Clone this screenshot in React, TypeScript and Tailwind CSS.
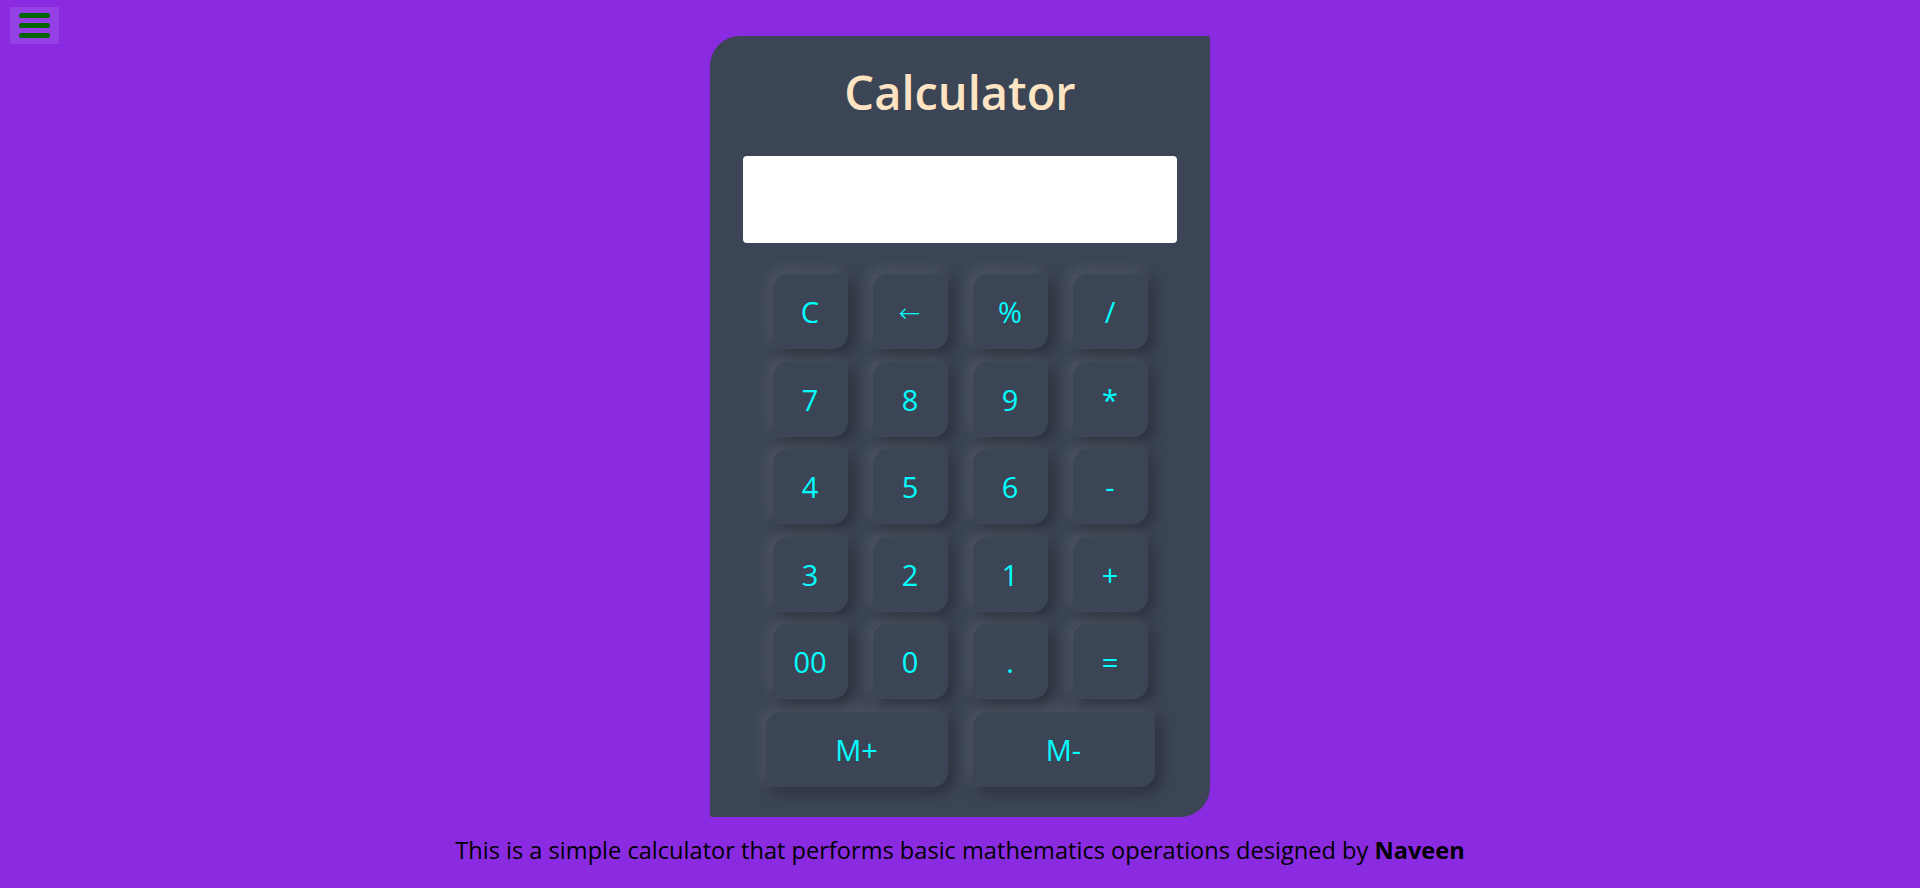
import React from "react";

const rows: string[][] = [
  ["C", "←", "%", "/"],
  ["7", "8", "9", "*"],
  ["4", "5", "6", "-"],
  ["3", "2", "1", "+"],
  ["00", "0", ".", "="],
];

const btnShadow =
  "shadow-[-5px_-5px_15px_rgba(255,255,255,0.1),5px_5px_15px_rgba(0,0,0,0.35)]";

export default function App() {
  return (
    <div
      className="relative min-h-[888px] w-full bg-[#8a2be2] pt-[36px]"
      style={{ fontFamily: '"Open Sans", "Noto Sans", sans-serif' }}
    >
      <button className="absolute left-[10px] top-[7px] flex h-[37px] w-[49px] flex-col items-center justify-center gap-[5px] bg-[rgba(255,255,255,0.1)]">
        <span className="block h-[5px] w-[31px] rounded-full bg-[#006400]" />
        <span className="block h-[5px] w-[31px] rounded-full bg-[#006400]" />
        <span className="block h-[5px] w-[31px] rounded-full bg-[#006400]" />
      </button>

      <div className="mx-auto flex w-[500px] flex-col items-center rounded-tl-[30px] rounded-br-[30px] rounded-tr-[2px] rounded-bl-[2px] bg-[#3c4555] pb-[30px] pt-[28px]">
        <h1 className="text-[47px] font-semibold leading-[56px] text-[#ffe4c4]">
          Calculator
        </h1>
        <div className="mt-[36px] h-[87px] w-[434px] rounded-[4px] bg-white" />
        <div className="mt-[31px] grid grid-cols-[repeat(4,75px)] gap-x-[25px] gap-y-[12.5px]">
          {rows.flat().map((k, i) => (
            <button
              key={i}
              className={`flex h-[75px] w-[75px] items-center justify-center rounded-tl-[15px] rounded-br-[15px] bg-[#3c4555] text-[29px] leading-none text-[#00ffff] ${btnShadow}`}
            >
              {k === "←" ? (
                <span
                  className="relative top-[1px] text-[26px] font-light"
                  style={{ fontFamily: '"DejaVu Sans", sans-serif' }}
                >
                  ←
                </span>
              ) : (
                k
              )}
            </button>
          ))}
        </div>
        <div className="mt-[12.5px] flex gap-[25px]">
          {["M+", "M-"].map((k) => (
            <button
              key={k}
              className={`flex h-[75px] w-[182px] items-center justify-center rounded-tl-[15px] rounded-br-[15px] bg-[#3c4555] text-[29px] leading-none text-[#00ffff] ${btnShadow}`}
            >
              {k}
            </button>
          ))}
        </div>
      </div>

      <p className="mt-[17px] text-center text-[23.6px] leading-[32px] text-black">
        This is a simple calculator that performs basic mathematics operations
        designed by <b className="font-bold">Naveen</b>
      </p>
    </div>
  );
}
